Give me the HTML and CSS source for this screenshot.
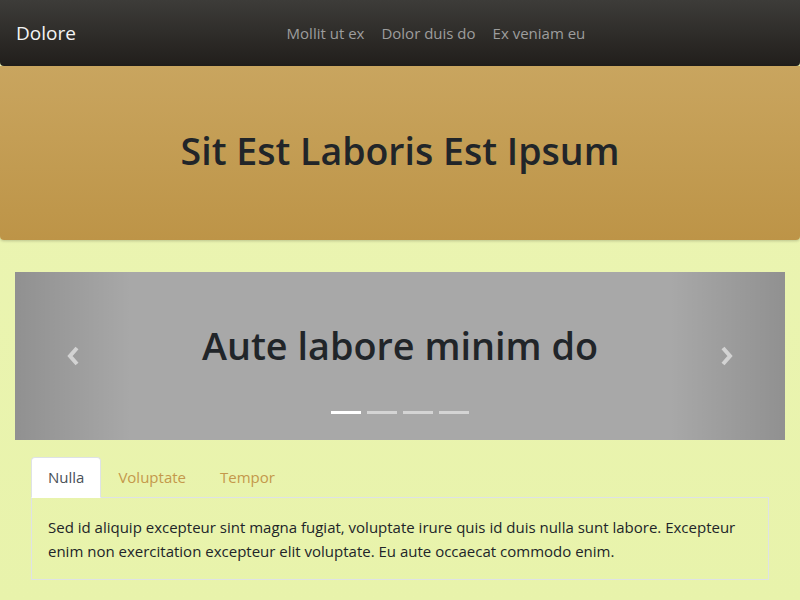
FILE: index.html
```html
<!DOCTYPE html>
<html>
<head>
<meta charset="utf-8">
<link rel="stylesheet" href="styles.css">
</head>
<body>
<nav class="navbar">
  <a class="brand" href="#">Dolore</a>
  <ul class="nav-links">
    <li><a href="#">Mollit ut ex</a></li>
    <li><a href="#">Dolor duis do</a></li>
    <li><a href="#">Ex veniam eu</a></li>
  </ul>
</nav>
<header class="jumbotron">
  <h1>Sit Est Laboris Est Ipsum</h1>
</header>
<main class="container">
  <section class="carousel">
    <div class="control left">
      <svg width="14" height="20" viewBox="0 0 14 20"><path d="M11 2 L4 10 L11 18" fill="none" stroke="currentColor" stroke-width="4" stroke-linejoin="miter"/></svg>
    </div>
    <h2>Aute labore minim do</h2>
    <div class="control right">
      <svg width="14" height="20" viewBox="0 0 14 20"><path d="M3 2 L10 10 L3 18" fill="none" stroke="currentColor" stroke-width="4" stroke-linejoin="miter"/></svg>
    </div>
    <ol class="indicators">
      <li class="active"></li>
      <li></li>
      <li></li>
      <li></li>
    </ol>
  </section>
  <section class="tabs">
    <ul class="tab-list">
      <li class="tab active">Nulla</li>
      <li class="tab">Voluptate</li>
      <li class="tab">Tempor</li>
    </ul>
    <div class="tab-content">
      <p>Sed id aliquip excepteur sint magna fugiat, voluptate irure quis id duis nulla sunt labore. Excepteur enim non exercitation excepteur elit voluptate. Eu aute occaecat commodo enim.</p>
    </div>
  </section>
</main>
</body>
</html>
```
FILE: styles.css
```css
* { box-sizing: border-box; }
html, body { height: 100%; }
body {
  margin: 0;
  font-family: "Open Sans", "Noto Sans", sans-serif;
  font-size: 16px;
  line-height: 1.5;
  color: #212529;
  background: linear-gradient(to bottom, #ecf5b4, #e8f3ab);
}
.navbar {
  display: flex;
  align-items: center;
  height: 66px;
  padding: 0 16px;
  background: linear-gradient(to bottom, #3d3c39, #211e1b);
  border-radius: 0 0 4px 4px;
}
.brand {
  color: #f4f4f4;
  font-size: 19px;
  text-decoration: none;
}
.nav-links {
  flex: 1;
  display: flex;
  justify-content: center;
  gap: 17px;
  margin: 0;
  padding: 0 0 0 12px;
  list-style: none;
}
.nav-links a {
  color: #9d9d9d;
  font-size: 15px;
  text-decoration: none;
}
.jumbotron {
  height: 174px;
  display: flex;
  align-items: center;
  justify-content: center;
  padding-bottom: 4px;
  background: linear-gradient(to bottom, #c9a55f, #bd9447);
  border-radius: 0 0 4px 4px;
  box-shadow: 0 1px 3px rgba(0,0,0,0.2);
}
.jumbotron h1 {
  margin: 0;
  font-size: 37.5px;
  font-weight: 600;
  color: #212529;
}
.container {
  padding: 32px 15px 0;
}
.carousel {
  position: relative;
  height: 168px;
  background: #a8a8a8;
  display: flex;
  align-items: center;
  justify-content: center;
}
.carousel h2 {
  margin: 0 0 20px;
  font-size: 37.8px;
  font-weight: 600;
  color: #212529;
}
.control {
  position: absolute;
  top: 0;
  bottom: 0;
  width: 15%;
  display: flex;
  align-items: center;
  justify-content: center;
  color: rgba(255,255,255,0.55);
}
.control.left {
  left: 0;
  background: linear-gradient(to right, rgba(0,0,0,0.14), rgba(0,0,0,0));
}
.control.right {
  right: 0;
  background: linear-gradient(to left, rgba(0,0,0,0.14), rgba(0,0,0,0));
}
.indicators {
  position: absolute;
  left: 0;
  right: 0;
  bottom: 26px;
  display: flex;
  justify-content: center;
  gap: 6px;
  margin: 0;
  padding: 0;
  list-style: none;
}
.indicators li {
  width: 30px;
  height: 3px;
  background: rgba(255,255,255,0.5);
}
.indicators li.active { background: #fff; }
.tabs {
  padding: 17px 16px 0;
}
.tab-list {
  display: flex;
  margin: 0;
  padding: 0;
  list-style: none;
  border-bottom: 1px solid #dee2e6;
}
.tab {
  padding: 8px 16px;
  margin-bottom: -1px;
  color: #c4984b;
  font-size: 15px;
  line-height: 23px;
  border: 1px solid transparent;
  border-radius: 4px 4px 0 0;
}
.tab.active {
  background: #fff;
  color: #495057;
  border-color: #dee2e6 #dee2e6 #fff;
}
.tab-content {
  border: 1px solid #dee2e6;
  border-top: 0;
  padding: 17px 16px 16px;
}
.tab-content p {
  margin: 0;
  font-size: 15px;
  line-height: 24px;
}
```
